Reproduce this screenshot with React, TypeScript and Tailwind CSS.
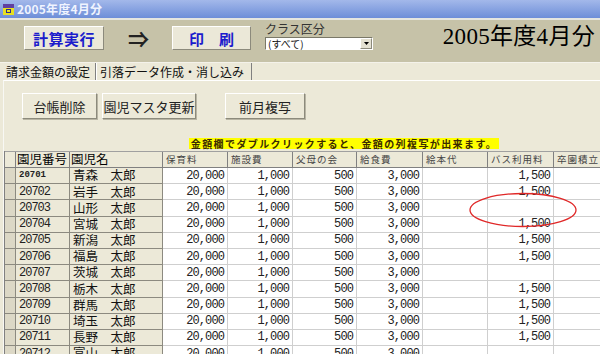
import React from "react";

const rows: [string, string, boolean][] = [
  ["20701", "青森", true],
  ["20702", "岩手", true],
  ["20703", "山形", false],
  ["20704", "宮城", true],
  ["20705", "新潟", true],
  ["20706", "福島", true],
  ["20707", "茨城", false],
  ["20708", "栃木", true],
  ["20709", "群馬", true],
  ["20710", "埼玉", true],
  ["20711", "長野", true],
  ["20712", "富山", false],
];

const numCols = ["保育料", "施設費", "父母の会", "給食費", "絵本代", "バス利用料"];
const numW = ["w-[65px]", "w-[65px]", "w-[64px]", "w-[66px]", "w-[65px]", "w-[66px]"];

function XPButton({ w, children }: { w: string; children: React.ReactNode }) {
  return (
    <div
      className={`${w} h-[26px] flex items-center justify-center bg-[#ece9d8] border border-t-white border-l-white border-r-[#8c8a7c] border-b-[#8c8a7c] shadow-[1px_1px_0_#b8b5a4] text-[13px] leading-none text-[#222]`}
    >
      {children}
    </div>
  );
}

export default function App() {
  return (
    <div className="relative w-[600px] h-[354px] overflow-hidden bg-[#ece9d8] font-['Noto_Sans_CJK_JP',sans-serif] text-black">
      {/* title bar */}
      <div className="h-[18px] flex items-center pl-[3px] gap-[3px] bg-gradient-to-b from-[#a3b8ea] to-[#6e8ed8]">
        <svg width="11" height="11" viewBox="0 0 11 11">
          <rect x="0" y="0" width="11" height="11" fill="#e8e020" />
          <rect x="0" y="0" width="11" height="4" fill="#6040a0" />
          <rect x="3" y="5" width="5" height="4" fill="#30308a" />
          <rect x="4" y="6" width="3" height="2" fill="#e8e020" />
        </svg>
        <span className="text-[12px] font-bold leading-none text-[#f0f4ff] tracking-[0.2px]">2005年度4月分</span>
      </div>
      <div className="h-[2px] bg-[#e6e6e0]" />

      {/* toolbar */}
      <div className="h-[42px] bg-[#c6c2a8] flex items-start">
        <div className="ml-[24px] mt-[6px] w-[80px] h-[24px] flex items-center justify-center bg-[#ebe8d8] border border-t-white border-l-white border-r-[#8c8a7c] border-b-[#8c8a7c] text-[15px] font-bold leading-none text-[#1c1ccc] tracking-[0.5px]">
          計算実行
        </div>
        <div className="ml-[24px] mt-[8px] w-[22px] text-[21px] leading-none text-[#222] font-bold">⇒</div>
        <div className="ml-[22px] mt-[6px] w-[79px] h-[24px] flex items-center justify-center bg-[#ebe8d8] border border-t-white border-l-white border-r-[#8c8a7c] border-b-[#8c8a7c] text-[15px] font-bold leading-none text-[#1c1ccc]">
          印　刷
        </div>
        <div className="ml-[14px] mt-[2px] flex flex-col">
          <div className="text-[12px] leading-[14px] text-[#333]">クラス区分</div>
          <div className="mt-[1px] w-[108px] h-[13px] bg-white border border-t-[#7a7868] border-l-[#7a7868] border-r-white border-b-white flex items-center">
            <span className="flex-1 pl-[2px] text-[10px] leading-none text-[#111]">(すべて)</span>
            <div className="w-[12px] h-[11px] bg-[#e4e1d2] border border-t-white border-l-white border-r-[#8c8a7c] border-b-[#8c8a7c] flex items-center justify-center">
              <svg width="5" height="3" viewBox="0 0 5 3">
                <polygon points="0,0 5,0 2.5,3" fill="#000" />
              </svg>
            </div>
          </div>
        </div>
        <div className="ml-auto mr-[5px] mt-[3px] text-[23px] leading-[28px] font-['Liberation_Serif','Noto_Sans_CJK_JP',serif] text-black tracking-[0.3px]">
          2005年度4月分
        </div>
      </div>
      <div className="h-[1px] bg-[#f4f2ea]" />

      {/* tabs */}
      <div className="h-[17px] flex items-end bg-[#ece9d8]">
        <div className="ml-[3px] h-[17px] w-[93px] pl-[3px] flex items-center border-r border-r-[#808080] text-[12px] leading-none text-[#111]">
          請求金額の設定
        </div>
        <div className="h-[17px] w-[156px] pl-[3px] flex items-center border-l border-l-white border-r border-r-[#808080] text-[12px] leading-none text-[#111]">
          引落データ作成・消し込み
        </div>
      </div>

      {/* panel */}
      <div className="ml-[3px] border-t border-t-white border-l border-l-[#f8f8f4] bg-[#ece9d8] flex flex-col">
        <div className="mt-[12px] flex items-start">
          <div className="ml-[18px]">
            <XPButton w="w-[75px]">台帳削除</XPButton>
          </div>
          <div className="ml-[5px]">
            <XPButton w="w-[94px]">園児マスタ更新</XPButton>
          </div>
          <div className="ml-[29px]">
            <XPButton w="w-[80px]">前月複写</XPButton>
          </div>
        </div>
        <div className="mt-[19px] ml-[185px] w-[310px] h-[11px] bg-[#ffff00] flex items-center justify-center text-[10px] leading-none tracking-[1.4px] text-[#3a2a00] font-bold">
          金額欄でダブルクリックすると、金額の列複写が出来ます。
        </div>

        {/* table */}
        <div className="mt-[2px] flex flex-col border-l border-l-[#808080]">
          {/* header */}
          <div className="h-[17px] flex bg-[#ece9d8] border-t border-t-[#a0a0a0]">
            <div className="w-[11px] shrink-0 border-r border-b border-[#808080] bg-[#ece9d8]" />
            <div className="w-[54px] shrink-0 border-r border-b border-[#808080] pl-[1px] flex items-center text-[12.5px] leading-none">園児番号</div>
            <div className="w-[93px] shrink-0 border-r border-b border-[#808080] pl-[1px] flex items-center text-[12.5px] leading-none">園児名</div>
            {numCols.map((c, i) => (
              <div
                key={c}
                className={`${numW[i]} shrink-0 border-r border-b border-[#808080] pl-[3px] flex items-center text-[9.5px] leading-none tracking-[1px] text-[#444]`}
              >
                {c}
              </div>
            ))}
            <div className="flex-1 border-b border-[#808080] pl-[3px] flex items-center text-[9.5px] leading-none tracking-[1px] text-[#444] whitespace-nowrap">
              卒園積立
            </div>
          </div>
          {rows.map(([id, pref, bus], r) => (
            <div key={id} className="h-[16.2px] flex">
              <div className="w-[11px] shrink-0 border-r border-b border-[#8c8a80] bg-[#dcd8c6]" />
              <div
                className={`w-[54px] shrink-0 border-r border-b border-[#8c8a80] bg-[#ece9d8] pl-[3px] flex items-center font-['Liberation_Mono',monospace] leading-none text-[#222] ${
                  r === 0 ? "text-[9px] font-bold" : "text-[12px] tracking-[-1px]"
                }`}
              >
                {id}
              </div>
              <div className="w-[93px] shrink-0 border-r border-b border-[#8c8a80] bg-[#ece9d8] pl-[3px] flex items-center text-[12.5px] leading-none text-[#111]">
                {pref}　太郎
              </div>
              {["20,000", "1,000", "500", "3,000", "", bus ? "1,500" : ""].map((v, i) => (
                <div
                  key={i}
                  className={`${numW[i]} shrink-0 border-r border-b border-[#cfcfcf] bg-white pr-[3px] flex items-center justify-end font-['Liberation_Mono',monospace] text-[12px] tracking-[-0.9px] leading-none text-[#222]`}
                >
                  {v}
                </div>
              ))}
              <div className="flex-1 border-b border-[#cfcfcf] bg-white" />
            </div>
          ))}
        </div>
      </div>

      {/* red ellipse annotation */}
      <svg className="absolute left-[469px] top-[192px]" width="110" height="38" viewBox="0 0 110 38">
        <ellipse cx="54" cy="18" rx="53" ry="16.5" fill="none" stroke="#e02828" strokeWidth="1.3" />
      </svg>
    </div>
  );
}
